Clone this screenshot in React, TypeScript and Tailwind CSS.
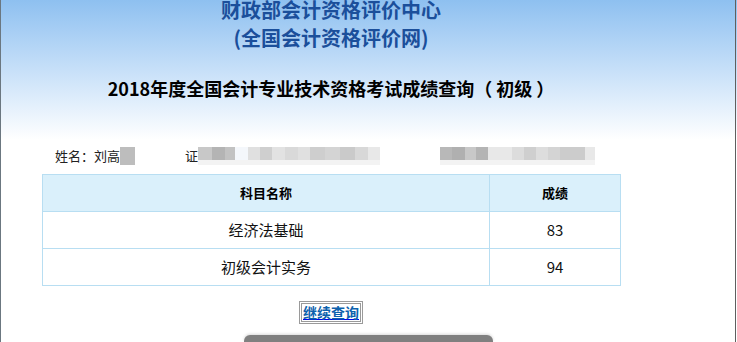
import React from 'react'

const font = { fontFamily: '"Microsoft YaHei", "Noto Sans CJK SC", "Noto Sans", sans-serif' }

// 打码区域的色块（宽度, 颜色）
const blurA: [number, string][] = [
  [14, '#c8c8c8'], [13, '#b4b4b4'], [10, '#c2c2c2'], [13, '#f4f7fb'],
  [12, '#e0e0e0'], [12, '#cfcfcf'], [13, '#e2e2e2'], [13, '#d9d9d9'],
  [12, '#e0e0e0'], [15, '#cecece'], [15, '#d4d4d4'], [15, '#cacaca'],
  [13, '#d8d8d8'], [12, '#e8e8e8'],
]
const blurB: [number, string][] = [
  [12, '#b8b8b8'], [13, '#b0b0b0'], [11, '#c8c8c8'], [12, '#b4b4b4'],
  [24, '#e8e8e8'], [12, '#dcdcdc'], [12, '#cfcfcf'], [12, '#dddddd'],
  [12, '#d4d4d4'], [25, '#cccccc'], [10, '#e8e8e8'],
]

function Blur({ blocks }: { blocks: [number, string][] }) {
  return (
    <div className="flex h-[18px]">
      {blocks.map(([w, c], i) => (
        <div key={i} className="h-full" style={{ width: w, background: `linear-gradient(${c} 70%, #f3f3f3 70%)` }} />
      ))}
    </div>
  )
}

const rows = [
  { name: '经济法基础', score: '83' },
  { name: '初级会计实务', score: '94' },
]

export default function App() {
  return (
    <div className="relative h-[342px] w-[737px] overflow-hidden bg-white" style={font}>
      <div className="absolute inset-x-0 top-0 h-[140px] bg-gradient-to-b from-[#8ec0f0] to-white" />
      <div className="absolute inset-y-0 left-0 w-px bg-[#6b7780]" />
      <div className="absolute inset-y-0 right-[1px] w-px bg-[#5f5f5f]" />

      <div className="relative flex w-[662px] flex-col items-center">
        <div className="text-[20px] font-bold leading-[20px] text-[#1b4f9b]">财政部会计资格评价中心</div>
        <div className="mt-[8px] text-[20px] font-bold leading-[20px] text-[#1b4f9b]">(全国会计资格评价网)</div>
        <div className="mt-[30px] text-[18px] font-bold leading-[20px] text-black">
          2018年度全国会计专业技术资格考试成绩查询（ 初级 ）
        </div>

        <div className="mt-[49px] flex w-full items-center text-[13px] leading-[18px] text-[#222]">
          <span className="ml-[55px]">姓名：刘高</span>
          <div className="h-[18px] w-[15px] bg-[#bdbdbd]" />
          <span className="ml-[50px]">证</span>
          <Blur blocks={blurA} />
          <div className="w-[60px]" />
          <Blur blocks={blurB} />
        </div>

        <table className="mt-[9px] ml-[1px] w-[579px] border-collapse text-center">
          <thead>
            <tr className="h-[37px] bg-[#daf0fb] text-[13px] font-bold text-black">
              <th className="w-[447px] border border-[#b8def2]">科目名称</th>
              <th className="border border-[#b8def2]">成绩</th>
            </tr>
          </thead>
          <tbody>
            {rows.map(r => (
              <tr key={r.name} className="h-[37px] text-[15px] text-[#111]">
                <td className="border border-[#b8def2]">{r.name}</td>
                <td className="border border-[#b8def2]">{r.score}</td>
              </tr>
            ))}
          </tbody>
        </table>

        <div className="mt-[15px] border border-[#9a9a9a] p-[1px]">
          <div className="border border-[#9a9a9a] px-[1px] text-[14px] font-bold leading-[17px] text-[#0d62ad] underline decoration-[#0000ee]">
            继续查询
          </div>
        </div>
      </div>

      <div className="absolute bottom-0 left-[244px] h-[7px] w-[249px] rounded-t-[6px] bg-[#808080] shadow-[0_-1px_3px_rgba(0,0,0,0.15)]" />
    </div>
  )
}
